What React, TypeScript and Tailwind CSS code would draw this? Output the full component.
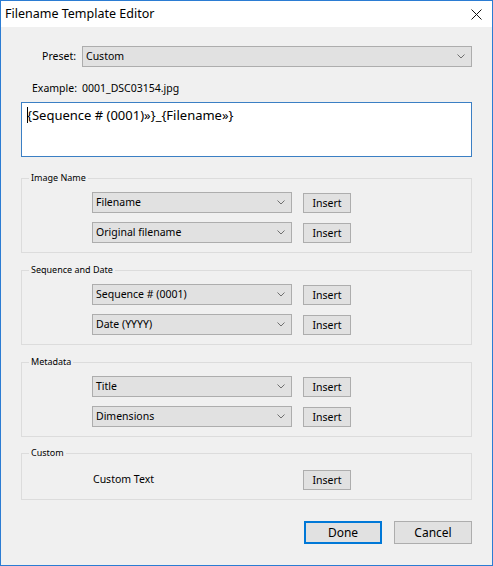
import type { ReactNode } from 'react'

const Chevron = () => (
  <svg width="8" height="5" viewBox="0 0 8 5" className="shrink-0">
    <path d="M0.5 0.5 L4 4 L7.5 0.5" fill="none" stroke="#6f6f6f" strokeWidth="1" />
  </svg>
)

type SelectProps = {
  value: string
  className?: string
}

const Select = ({ value, className = '' }: SelectProps) => {
  return (
    <div className={`flex h-[21px] items-center justify-between border border-[#adadad] bg-[#e1e1e1] pl-[3px] pr-[6px] ${className}`}>
      <span>{value}</span>
      <Chevron />
    </div>
  )
}

const InsertButton = () => (
  <button className="ml-[11px] h-[20px] w-[48px] border border-[#adadad] bg-[#e1e1e1] leading-[18px]">
    Insert
  </button>
)

type GroupProps = {
  title: string
  className?: string
  children: ReactNode
}

const Group = ({ title, className = '', children }: GroupProps) => {
  return (
    <fieldset className={`border border-[#dcdcdc] pb-[9px] ${className}`}>
      <legend className="ml-[7px] px-[2px] text-[9px] leading-[14px]">{title}</legend>
      {children}
    </fieldset>
  )
}

const PickRow = ({ value }: { value: string }) => (
  <div className="flex items-end">
    <Select value={value} className="w-[200px]" />
    <InsertButton />
  </div>
)

const groups = [
  { title: 'Image Name', rows: ['Filename', 'Original filename'], gap: 'mt-[14px]' },
  { title: 'Sequence and Date', rows: ['Sequence # (0001)', 'Date (YYYY)'], gap: 'mt-[10px]' },
  { title: 'Metadata', rows: ['Title', 'Dimensions'], gap: 'mt-[10px]' }
]

const App = () => {
  return (
    <div className="flex h-[566px] w-[493px] flex-col border border-[#2b7cd3] bg-[#f0f0f0] font-['Noto_Sans',sans-serif] text-[10.5px] text-black">
      {/* title bar */}
      <div className="flex h-[26px] shrink-0 items-center justify-between bg-white pl-[4px] pr-[10px]">
        <span className="text-[12.5px]">Filename Template Editor</span>
        <svg width="11" height="11" viewBox="0 0 11 11">
          <path d="M0.5 0.5 L10.5 10.5 M10.5 0.5 L0.5 10.5" stroke="#111" strokeWidth="1" />
        </svg>
      </div>

      <div className="flex flex-col px-[20px]">
        <div className="mt-[19px] flex items-center">
          <span className="w-[61px] pr-[6px] text-right">Preset:</span>
          <Select value="Custom" className="flex-1" />
        </div>

        <div className="mt-[13px] flex h-[18px] items-center">
          <span className="w-[61px] pl-[11px]">Example:</span>
          <span>0001_DSC03154.jpg</span>
        </div>

        <div className="mt-[4px] h-[55px] border border-[#3b7fc4] bg-white px-[5px] pt-[3px] text-[13px] leading-[18px]">
          <span className="relative">
            <span className="absolute left-0 top-[1px] h-[16px] w-px bg-black" />
            {'{Sequence # (0001)»}_{Filename»}'}
          </span>
        </div>

        {groups.map((g) => (
          <Group key={g.title} title={g.title} className={g.gap}>
            <div className="flex flex-col gap-[9px] pl-[70px] pt-[7px]">
              {g.rows.map((r) => (
                <PickRow key={r} value={r} />
              ))}
            </div>
          </Group>
        ))}

        <Group title="Custom" className="mt-[9px]">
          <div className="flex items-end pl-[70px] pt-[9px]">
            <span className="flex h-[21px] w-[200px] items-center pl-[1px]">Custom Text</span>
            <InsertButton />
          </div>
        </Group>

        <div className="mt-[21px] flex justify-end gap-[12px]">
          <button className="h-[23px] w-[78px] border-2 border-[#0078d7] bg-[#e1e1e1] text-[12px]">Done</button>
          <button className="h-[23px] w-[78px] border border-[#adadad] bg-[#e1e1e1] text-[12px]">Cancel</button>
        </div>
      </div>
    </div>
  )
}

export default App
